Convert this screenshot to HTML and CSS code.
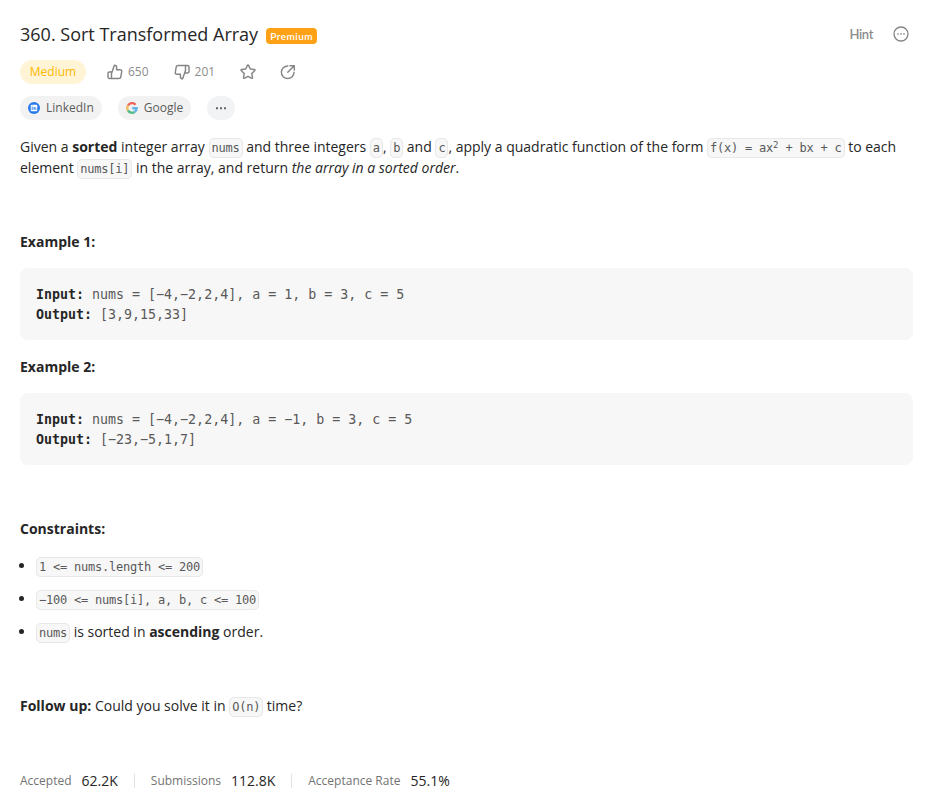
FILE: index.html
```html
<!DOCTYPE html>
<html lang="en">
<head>
<meta charset="utf-8">
<title>Sort Transformed Array</title>
<link rel="stylesheet" href="styles.css">
</head>
<body>
<main class="problem">
  <header class="head">
    <h1>360. Sort Transformed Array</h1>
    <span class="premium">Premium</span>
    <span class="hint">Hint</span>
    <svg class="more" viewBox="0 0 16 16"><circle cx="8" cy="8" r="7"/><path d="M4.300 8h1.400M7.300 8h1.400M10.300 8h1.400"/></svg>
  </header>
  <div class="actions">
    <span class="difficulty">Medium</span>
    <span class="action like"><svg viewBox="0 0 16 16"><path d="M4.500 14.500V9.500L7.400 1.200c1.500 0 2.200.9 2.200 2.100V5.700h3.500c1.200 0 1.800.8 1.600 1.800l-.9 5.500c-.2 1-.8 1.500-1.800 1.500H2.400c-.9 0-1.400-.5-1.400-1.400V9.400C1 8.500 1.500 8 2.400 8h2.100"/></svg><i>650</i></span>
    <span class="action dislike"><svg viewBox="0 0 16 16"><path d="M11.500 1.500V6.500L8.600 14.800c-1.500 0-2.200-.9-2.200-2.100V10.300H2.900c-1.200 0-1.800-.8-1.600-1.800L2.200 3c.2-1 .8-1.500 1.800-1.500h9.600c.9 0 1.400.5 1.400 1.400v4.700c0 .9-.5 1.400-1.400 1.400h-2.600"/></svg><i>201</i></span>
    <span class="action star"><svg viewBox="0 0 16 16"><path d="M7.300 1.600q.7-1.200 1.400 0L10.300 5l3.900.5q1.400.3.400 1.300l-2.800 2.700.7 3.900q.1 1.300-1.100.8L8 12.400l-3.400 1.800q-1.200.5-1.100-.8l.7-3.900L1.400 6.800q-1-1 .4-1.300L5.700 5z"/></svg></span>
    <span class="action share"><svg viewBox="0 0 16 16"><path d="M7.800 2A6.300 6.300 0 1 0 14 8.300M7.800 8.200l6.200-6.200M10 1.700h4.300v4.300"/></svg></span>
  </div>
  <div class="tags">
    <span class="tag linkedin"><svg viewBox="0 0 12 12"><circle cx="6" cy="6" r="6" fill="#2878eb"/><rect x="2.700" y="2.700" width="6.600" height="6.600" rx="1" fill="#fff"/><path d="M4.200 5v3M4.200 3.600v.7M6 8V5M6 6.300q1.700-1.700 1.900.2V8" fill="none" stroke="#2878eb" stroke-width=".9"/></svg>LinkedIn</span>
    <span class="tag google"><svg viewBox="0 0 12 12" fill="none" stroke-width="2.400"><path d="M2 3.500A4.700 4.700 0 0 1 9.600 2.700" stroke="#e96459"/><path d="M2 3.500A4.700 4.700 0 0 0 2 8.500" stroke="#efbd65"/><path d="M2 8.500A4.700 4.700 0 0 0 8.600 9.900" stroke="#55b98a"/><path d="M8.600 9.900Q10.600 8.500 10.700 6.300H6.200" stroke="#61b5e8"/></svg>Google</span>
    <span class="tag dots"><svg viewBox="0 0 12 12"><path d="M1 5.200h2v2H1zM5 5.200h2v2H5zM9 5.200h2v2H9z" fill="#666"/></svg></span>
  </div>
  <section class="content">
    <p class="intro">Given a <strong>sorted</strong> integer array <code>nums</code> and three integers <code>a</code>, <code>b</code> and <code>c</code>, apply a quadratic function of the form <code>f(x) = ax<sup>2</sup> + bx + c</code> to each element <code>nums[i]</code> in the array, and return <em>the array in a sorted order</em>.</p>
    <h2 class="first">Example 1:</h2>
    <pre><b>Input:</b> nums = [−4,−2,2,4], a = 1, b = 3, c = 5
<b>Output:</b> [3,9,15,33]</pre>
    <h2>Example 2:</h2>
    <pre><b>Input:</b> nums = [−4,−2,2,4], a = −1, b = 3, c = 5
<b>Output:</b> [−23,−5,1,7]</pre>
    <h2 class="limits">Constraints:</h2>
    <ul>
      <li><code>1 &lt;= nums.length &lt;= 200</code></li>
      <li><code>−100 &lt;= nums[i], a, b, c &lt;= 100</code></li>
      <li><code>nums</code> is sorted in <strong>ascending</strong> order.</li>
    </ul>
    <p class="follow"><strong>Follow up:</strong> Could you solve it in <code>O(n)</code> time?</p>
  </section>
  <footer class="stats">
    <div>Accepted<span>62.2K</span></div>
    <div>Submissions<span>112.8K</span></div>
    <div>Acceptance Rate<span>55.1%</span></div>
  </footer>
</main>
</body>
</html>
```
FILE: styles.css
```css
* { box-sizing: border-box; }
body { margin: 0; background: #fff; color: #262626; font: 14px/21px "Open Sans", sans-serif; }
.problem { padding: 22px 20px 0; }
.head { display: flex; align-items: center; height: 24px; }
h1 { margin: 0; font-size: 18px; line-height: 24px; font-weight: 400; white-space: nowrap; }
.premium { margin: 4px 0 0 8px; width: 51px; height: 16px; border-radius: 4px; background: #ffa116; color: #fff; font: 600 10px/17px Lato, sans-serif; letter-spacing: .45px; text-align: center; }
.hint { margin-left: auto; color: #8c8c8c; font: 600 13px/24px Lato, sans-serif; letter-spacing: -.4px; }
.more { width: 16px; height: 16px; margin: 0 4px 0 20px; fill: none; stroke: #858585; stroke-width: 1.3; }
.actions { display: flex; align-items: center; height: 24px; margin-top: 14px; font-size: 12px; color: #8c8c8c; }
.difficulty { width: 66px; height: 24px; border-radius: 12px; background: #fff4d6; color: #ffb800; line-height: 23px; text-align: center; }
.action { display: flex; align-items: center; gap: 5px; }
.action i { font-style: normal; line-height: 19px; margin-bottom: 2px; }
.action svg { width: 16px; height: 16px; fill: none; stroke: #858585; stroke-width: 1.45; stroke-linejoin: round; stroke-linecap: round; }
.like { margin-left: 21px; }
.dislike { margin-left: 25px; }
.star { margin-left: 25px; }
.share { margin-left: 24px; }
.tags { display: flex; gap: 16px; height: 24px; margin-top: 12px; }
.tag { display: flex; align-items: center; gap: 6px; height: 24px; padding: 0 8px; border-radius: 12px; background: #f2f2f2; color: #5c5c5c; font-size: 12px; line-height: 24px; }
.tag svg { width: 12px; height: 12px; }
.dots { background: #f2f3f4; }
p, h2 { margin: 0; }
.intro { margin-top: 16px; }
strong, b { font-weight: 700; }
code { padding: 2px; border: 1px solid #e8e8e8; border-radius: 5px; background: #f7f7f7; color: #595959; font: 12px/16px "DejaVu Sans Mono", monospace; letter-spacing: -.224px; }
sup { font-size: 9px; line-height: 0; vertical-align: 4px; letter-spacing: 0; }
h2 { margin-top: 16px; font-size: 14px; line-height: 21px; font-weight: 700; }
h2.first { margin-top: 53px; }
h2.limits { margin-top: 53px; }
pre { margin: 16px 0 0; height: 72px; padding: 17px 16px 15px; border-radius: 8px; background: #f7f7f7; color: #595959; font: 13.300px/20px "DejaVu Sans Mono", monospace; }
pre b { color: #262626; }
ul { margin: 16px 0 0; padding-left: 16px; }
li { height: 21px; margin-bottom: 12px; }
.follow { margin-top: 53px; }
.stats { display: flex; margin-top: 54px; color: #737373; font-size: 12px; line-height: 21px; }
.stats div { display: flex; align-items: center; }
.stats div + div::before { content: ""; width: 1px; height: 14px; margin: 0 16px; background: #e2e2e2; }
.stats span { margin-left: 10px; color: #262626; font-size: 14px; }
```
